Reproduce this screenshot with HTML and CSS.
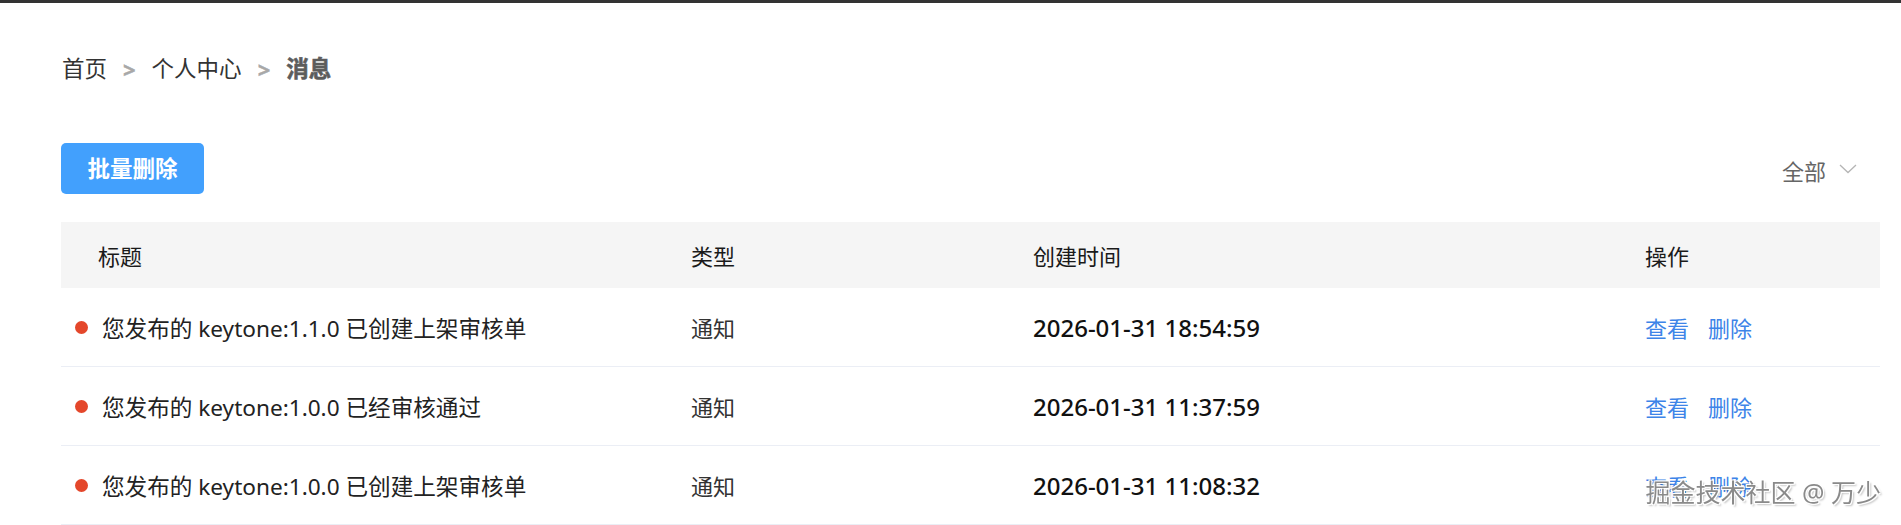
FILE: index.html
```html
<!DOCTYPE html>
<html lang="zh-CN">
<head>
<meta charset="utf-8">
<title>消息</title>
<link rel="stylesheet" href="styles.css">
</head>
<body>
<div class="topbar"></div>
<main class="page">
  <nav class="breadcrumb">
    <span class="crumb">首页</span>
    <span class="sep">&gt;</span>
    <span class="crumb">个人中心</span>
    <span class="sep">&gt;</span>
    <span class="crumb current">消息</span>
  </nav>

  <div class="toolbar">
    <button class="btn-primary" type="button">批量删除</button>
    <div class="select">
      <span class="select-label">全部</span>
      <svg class="chevron" width="18" height="10" viewBox="0 0 18 10"><polyline points="1,1 9,8.5 17,1" fill="none" stroke="#b5b5b5" stroke-width="1.3"/></svg>
    </div>
  </div>

  <div class="table">
    <div class="thead">
      <div class="th th-title">标题</div>
      <div class="th">类型</div>
      <div class="th">创建时间</div>
      <div class="th">操作</div>
    </div>
    <div class="tr">
      <div class="td td-title"><span class="dot"></span><span>您发布的 keytone:1.1.0 已创建上架审核单</span></div>
      <div class="td">通知</div>
      <div class="td date">2026-01-31 18:54:59</div>
      <div class="td actions"><a class="link">查看</a><a class="link">删除</a></div>
    </div>
    <div class="tr">
      <div class="td td-title"><span class="dot"></span><span>您发布的 keytone:1.0.0 已经审核通过</span></div>
      <div class="td">通知</div>
      <div class="td date">2026-01-31 11:37:59</div>
      <div class="td actions"><a class="link">查看</a><a class="link">删除</a></div>
    </div>
    <div class="tr">
      <div class="td td-title"><span class="dot"></span><span>您发布的 keytone:1.0.0 已创建上架审核单</span></div>
      <div class="td">通知</div>
      <div class="td date">2026-01-31 11:08:32</div>
      <div class="td actions"><a class="link">查看</a><a class="link">删除</a></div>
    </div>
  </div>
</main>
<div class="watermark">掘金技术社区 @ 万少</div>
</body>
</html>
```

FILE: styles.css
```css
* { box-sizing: border-box; }

html, body {
  margin: 0;
  background: #fff;
}

body {
  font-family: "Noto Sans", "Noto Sans CJK SC", sans-serif;
  font-size: 22px;
  color: #222;
  overflow: hidden;
}

.topbar {
  height: 3px;
  background: #333;
}

.page {
  padding: 51px 21px 0 61px;
}

.breadcrumb {
  display: flex;
  align-items: center;
  height: 30px;
  line-height: 30px;
  gap: 16px;
  padding-left: 1px;
  font-size: 22.5px;
}

.crumb { color: #333; }

.crumb.current {
  color: #5c5c5c;
  font-weight: 700;
  -webkit-text-stroke: 0.6px #5c5c5c;
}

.sep {
  color: #a8a8a8;
  font-weight: 700;
  font-size: 22px;
  -webkit-text-stroke: 0.4px #a8a8a8;
}

.toolbar {
  display: flex;
  align-items: center;
  justify-content: space-between;
  margin-top: 59px;
}

.btn-primary {
  width: 143px;
  height: 51px;
  border: none;
  border-radius: 5px;
  background: #42a0fd;
  color: #fff;
  font-family: inherit;
  font-size: 22.5px;
  font-weight: 700;
  padding: 0;
  line-height: 51px;
}

.select {
  display: flex;
  align-items: center;
  gap: 13px;
  padding-right: 23px;
  margin-top: 3px;
  color: #666;
}

.chevron { display: block; margin-top: -2px; }

.table {
  margin-top: 28px;
}

.thead, .tr {
  display: grid;
  grid-template-columns: 630px 342px 612px 1fr;
  align-items: center;
}

.thead {
  height: 66px;
  background: #f5f5f5;
}

.th {
  color: #1a1a1a;
}

.th-title { padding-left: 37px; }

.tr {
  height: 79px;
  border-bottom: 1px solid #ebeef5;
}

.td { color: #333; }

.td-title {
  display: flex;
  align-items: center;
  gap: 14px;
  padding-left: 14px;
  color: #222;
  font-size: 22.6px;
}

.dot {
  width: 13px;
  height: 13px;
  border-radius: 50%;
  background: #e4472b;
  flex: none;
}

.date {
  font-size: 24px;
  font-weight: 500;
  color: #111;
}

.actions {
  display: flex;
  gap: 19px;
}

.link {
  color: #3d84e8;
  cursor: pointer;
}

.watermark {
  position: fixed;
  right: 20px;
  bottom: 16px;
  font-size: 25px;
  color: #8a8a8a;
  text-shadow: 1px 1px 0 #fff, -1px -1px 0 #fff, 1px -1px 0 #fff, -1px 1px 0 #fff, 2px 2px 2px rgba(0,0,0,0.25);
  pointer-events: none;
}
```
